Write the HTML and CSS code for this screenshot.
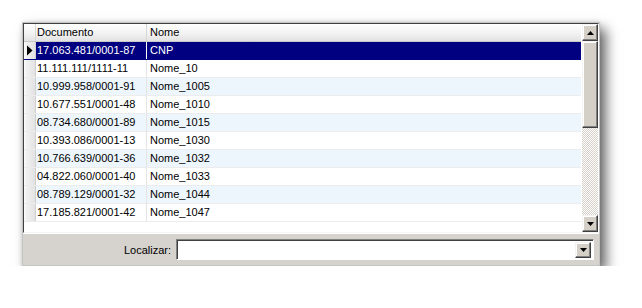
FILE: index.html
```html
<!DOCTYPE html>
<html>
<head>
<meta charset="utf-8">
<link rel="stylesheet" href="styles.css">
</head>
<body>
<div class="window">
  <div class="grid">
    <div class="table">
      <div class="row header">
        <div class="ind"></div>
        <div class="c1">Documento</div>
        <div class="c2">Nome</div>
      </div>
      <div class="row selected">
        <div class="ind"><svg width="7" height="11" viewBox="0 0 7 11"><path d="M1 0.5 L6.5 5.5 L1 10.5 Z" fill="#000"/></svg></div>
        <div class="c1">17.063.481/0001-87</div>
        <div class="c2">CNP</div>
      </div>
      <div class="row"><div class="ind"></div><div class="c1">11.111.111/1111-11</div><div class="c2">Nome_10</div></div>
      <div class="row alt"><div class="ind"></div><div class="c1">10.999.958/0001-91</div><div class="c2">Nome_1005</div></div>
      <div class="row"><div class="ind"></div><div class="c1">10.677.551/0001-48</div><div class="c2">Nome_1010</div></div>
      <div class="row alt"><div class="ind"></div><div class="c1">08.734.680/0001-89</div><div class="c2">Nome_1015</div></div>
      <div class="row"><div class="ind"></div><div class="c1">10.393.086/0001-13</div><div class="c2">Nome_1030</div></div>
      <div class="row alt"><div class="ind"></div><div class="c1">10.766.639/0001-36</div><div class="c2">Nome_1032</div></div>
      <div class="row"><div class="ind"></div><div class="c1">04.822.060/0001-40</div><div class="c2">Nome_1033</div></div>
      <div class="row alt"><div class="ind"></div><div class="c1">08.789.129/0001-32</div><div class="c2">Nome_1044</div></div>
      <div class="row"><div class="ind"></div><div class="c1">17.185.821/0001-42</div><div class="c2">Nome_1047</div></div>
    </div>
    <div class="scrollbar">
      <div class="sbtn"><svg width="7" height="4" viewBox="0 0 7 4"><path d="M3.5 0 L7 4 L0 4 Z" fill="#000"/></svg></div>
      <div class="thumb"></div>
      <div class="track"></div>
      <div class="sbtn"><svg width="7" height="4" viewBox="0 0 7 4"><path d="M0 0 L7 0 L3.5 4 Z" fill="#000"/></svg></div>
    </div>
  </div>
  <div class="footer">
    <span class="label">Localizar:</span>
    <div class="combo">
      <div class="combo-text"></div>
      <div class="sbtn combo-btn"><svg width="7" height="4" viewBox="0 0 7 4"><path d="M0 0 L7 0 L3.5 4 Z" fill="#000"/></svg></div>
    </div>
  </div>
</div>
</body>
</html>
```

FILE: styles.css
```css
html, body {
  margin: 0;
  padding: 0;
  background: #ffffff;
}
body {
  font-family: "Liberation Sans", Arial, sans-serif;
  font-size: 11px;
  color: #000;
}
.window {
  margin: 22px 0 0 22px;
  width: 578px;
  height: 244px;
  box-sizing: border-box;
  border: 1px solid #c4c4c4;
  background: #d4d0c8;
  display: flex;
  flex-direction: column;
  box-shadow: 6px 7px 12px rgba(0, 0, 0, 0.6), 0 0 4px rgba(0, 0, 0, 0.12);
}
.grid {
  height: 210px;
  box-sizing: border-box;
  border-top: 1px solid #404040;
  border-left: 1px solid #404040;
  border-right: 1px solid #ffffff;
  border-bottom: 1px solid #f4f4f4;
  display: flex;
  background: #ffffff;
}
.table {
  flex: 1;
  background: #ffffff;
  overflow: hidden;
}
.row {
  display: flex;
  height: 18px;
  box-sizing: border-box;
  border-bottom: 1px solid #ececec;
  line-height: 17px;
  background: #ffffff;
}
.row.alt {
  background: #edf5fd;
}
.row .ind {
  width: 11px;
  flex: none;
  background: linear-gradient(to right, #ffffff 0, #f2f2f2 2px, #e2e2e2 100%);
  border-right: 1px solid #d0d0d0;
  display: flex;
  align-items: center;
  justify-content: center;
}
.row .c1 {
  width: 111px;
  box-sizing: border-box;
  flex: none;
  padding-left: 1px;
  border-right: 1px solid #e4e4e4;
  white-space: nowrap;
  overflow: hidden;
}
.row .c2 {
  flex: 1;
  padding-left: 3px;
  white-space: nowrap;
}
.row.header {
  background: linear-gradient(to bottom, #ffffff 0, #f4f4f4 50%, #e2e2e2 100%);
  border-bottom: 1px solid #c8c8c8;
}
.row.header .c1 {
  border-right: 1px solid #d6d6d6;
}
.row.header .ind {
  background: linear-gradient(to bottom, #ffffff 0, #f4f4f4 50%, #e2e2e2 100%);
  border-right: 1px solid #d6d6d6;
}
.row.selected .c1,
.row.selected .c2 {
  background: #000080;
  color: #ffffff;
}
.row.selected .c1 {
  border-right: 1px solid #ffffff;
}
.row.selected {
  border-bottom-color: #000080;
}
.scrollbar {
  width: 17px;
  flex: none;
  display: flex;
  flex-direction: column;
  border-left: 1px solid #ffffff;
  box-sizing: border-box;
}
.sbtn {
  height: 17px;
  flex: none;
  box-sizing: border-box;
  background: #d4d0c8;
  border-top: 1px solid #f4f4f4;
  border-left: 1px solid #f4f4f4;
  border-right: 1px solid #404040;
  border-bottom: 1px solid #404040;
  box-shadow: inset -1px -1px 0 #808080, inset 1px 1px 0 #ffffff;
  display: flex;
  align-items: center;
  justify-content: center;
}
.thumb {
  height: 87px;
  flex: none;
  box-sizing: border-box;
  background: #d4d0c8;
  border-top: 1px solid #f4f4f4;
  border-left: 1px solid #f4f4f4;
  border-right: 1px solid #404040;
  border-bottom: 1px solid #404040;
  box-shadow: inset -1px -1px 0 #808080, inset 1px 1px 0 #ffffff;
}
.track {
  flex: 1;
  background-color: #ffffff;
  background-image: repeating-conic-gradient(#d4d0c8 0 25%, #ffffff 0 50%);
  background-size: 2px 2px;
}
.footer {
  flex: 1;
  display: flex;
  align-items: center;
  justify-content: flex-end;
  padding-right: 5px;
  background: #d6d3ce;
  border-top: 1px solid #ffffff;
}
.label {
  margin-right: 5px;
  color: #000;
}
.combo {
  width: 418px;
  height: 21px;
  box-sizing: border-box;
  display: flex;
  background: #ffffff;
  border-top: 1px solid #808080;
  border-left: 1px solid #808080;
  border-right: 1px solid #ffffff;
  border-bottom: 1px solid #ffffff;
  box-shadow: inset 1px 1px 0 #404040;
  padding: 2px 2px 1px 2px;
}
.combo-text {
  flex: 1;
}
.combo-btn {
  width: 16px;
  height: 16px;
}
```
